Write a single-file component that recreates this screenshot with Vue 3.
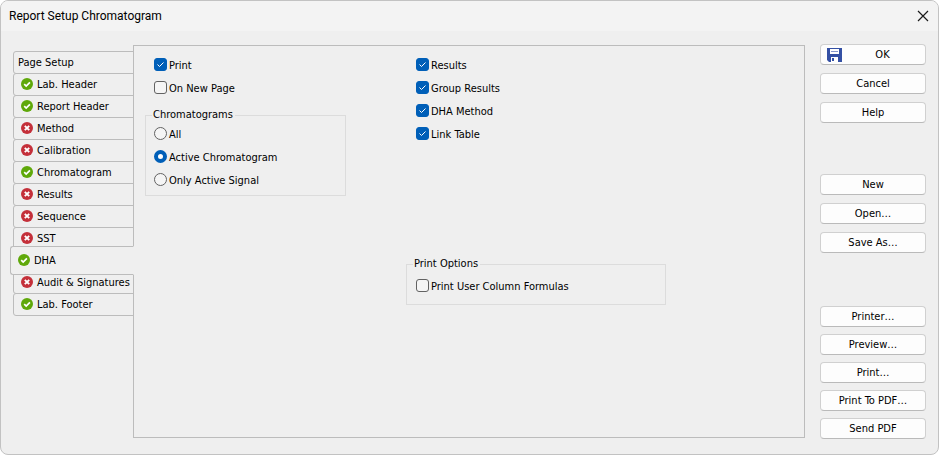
<template>
  <div class="dialog" role="dialog" aria-labelledby="dialog-title">
    <header class="title-bar">
      <h1 id="dialog-title">Report Setup Chromatogram</h1>
      <button type="button" class="close" aria-label="Close">
        <svg width="12" height="12" viewBox="0 0 12 12">
          <path d="M1 1L11 11M11 1L1 11" fill="none" stroke="#1a1a1a" stroke-width="1.2" />
        </svg>
      </button>
    </header>

    <main class="body">
      <nav class="tabs" role="tablist" aria-label="Report sections">
        <button
          v-for="tab in tabs"
          :key="tab.name"
          type="button"
          role="tab"
          class="tab"
          :class="{ active: tab.name === activeTab, plain: !tab.state }"
          :aria-selected="tab.name === activeTab"
          @click="activeTab = tab.name"
        >
          <svg v-if="tab.state" class="state" width="12" height="12" viewBox="0 0 12 12">
            <circle cx="6" cy="6" r="6" :fill="tab.state === 'on' ? '#5fa80a' : '#c4303a'" />
            <path
              v-if="tab.state === 'on'"
              d="M3.2 6.1L5.2 8.1L8.9 4.3"
              fill="none"
              stroke="#fff"
              stroke-width="1.7"
            />
            <path
              v-else
              d="M3.8 3.8L8.2 8.2M8.2 3.8L3.8 8.2"
              fill="none"
              stroke="#fff"
              stroke-width="1.9"
            />
          </svg>
          <span class="text">{{ tab.name }}</span>
        </button>
      </nav>

      <section class="panel" role="tabpanel">
        <div class="column">
          <label class="option">
            <input v-model="print" type="checkbox" /><span class="text">Print</span>
          </label>
          <label class="option">
            <input v-model="newPage" type="checkbox" /><span class="text">On New Page</span>
          </label>

          <fieldset class="chromatograms">
            <legend>Chromatograms</legend>
            <label v-for="item in sources" :key="item" class="option">
              <input v-model="source" type="radio" name="source" :value="item" />
              <span class="text">{{ item }}</span>
            </label>
          </fieldset>
        </div>

        <div class="column">
          <label v-for="item in contents" :key="item.name" class="option">
            <input v-model="item.checked" type="checkbox" />
            <span class="text">{{ item.name }}</span>
          </label>

          <fieldset class="print-options">
            <legend>Print Options</legend>
            <label class="option">
              <input v-model="userFormulas" type="checkbox" />
              <span class="text">Print User Column Formulas</span>
            </label>
          </fieldset>
        </div>
      </section>

      <aside class="actions">
        <div class="group">
          <button type="button" class="action">
            <svg class="disk" width="15" height="14" viewBox="0 0 15 14">
              <path d="M0 0H15V14H2L0 12Z" fill="#3450a4" />
              <path d="M3 1H12V6H3Z" fill="#fff" />
              <path d="M4 3H11V4H4Z" fill="#8796cb" />
              <path d="M4 9H11V14H4Z" fill="#fff" />
              <path d="M5 10H7V13H5Z" fill="#3450a4" />
            </svg>
            <span>OK</span>
          </button>
          <button type="button" class="action">Cancel</button>
          <button type="button" class="action">Help</button>
        </div>
        <div class="group files">
          <button type="button" class="action">New</button>
          <button type="button" class="action">Open…</button>
          <button type="button" class="action">Save As…</button>
        </div>
        <div class="group output">
          <button type="button" class="action">Printer…</button>
          <button type="button" class="action">Preview…</button>
          <button type="button" class="action">Print…</button>
          <button type="button" class="action">Print To PDF…</button>
          <button type="button" class="action">Send PDF</button>
        </div>
      </aside>
    </main>
  </div>
</template>

<script setup>
import { ref } from "vue";

const tabs = [
  { name: "Page Setup", state: null },
  { name: "Lab. Header", state: "on" },
  { name: "Report Header", state: "on" },
  { name: "Method", state: "off" },
  { name: "Calibration", state: "off" },
  { name: "Chromatogram", state: "on" },
  { name: "Results", state: "off" },
  { name: "Sequence", state: "off" },
  { name: "SST", state: "off" },
  { name: "DHA", state: "on" },
  { name: "Audit & Signatures", state: "off" },
  { name: "Lab. Footer", state: "on" },
];
const activeTab = ref("DHA");

const print = ref(true);
const newPage = ref(false);
const userFormulas = ref(false);

const sources = ["All", "Active Chromatogram", "Only Active Signal"];
const source = ref("Active Chromatogram");

const contents = ref([
  { name: "Results", checked: true },
  { name: "Group Results", checked: true },
  { name: "DHA Method", checked: true },
  { name: "Link Table", checked: true },
]);
</script>

<style>
body {
  margin: 0;
  background: #fff;
}
</style>

<style scoped>
.dialog {
  display: flex;
  flex-direction: column;
  box-sizing: border-box;
  min-height: 100vh;
  overflow: hidden;
  border: 1px solid #c2c2c2;
  border-radius: 8px;
  background: #efefef;
  color: #000;
  font: 11px/14px Tahoma, "DejaVu Sans Condensed", sans-serif;
}

button {
  margin: 0;
  font: inherit;
  color: inherit;
}

.title-bar {
  display: flex;
  align-items: center;
  justify-content: space-between;
  height: 30px;
  padding: 0 9px 0 8px;
  background: #f3f3f3;
}

.title-bar h1 {
  margin: 0;
  font: 12px/16px "Segoe UI", Roboto, sans-serif;
}

.close {
  display: flex;
  padding: 0;
  border: 0;
  background: none;
}

.body {
  display: flex;
  flex: 1;
  padding: 13px 12px 14px 9px;
}

/* tabs overlap the panel's left border by one pixel */
.tabs {
  display: flex;
  flex-direction: column;
  width: 124px;
  margin-top: 7px;
  margin-right: -1px;
}

.tab {
  display: flex;
  align-items: center;
  gap: 4px;
  box-sizing: border-box;
  height: 23px;
  margin: 0 0 -1px 3px;
  padding: 0 0 1px 7px;
  border: 1px solid #bcbcbc;
  border-radius: 3px 0 0 3px;
  background: #efefef;
  text-align: left;
  white-space: nowrap;
}

.tab.plain {
  padding-left: 4px;
}

.tab.active {
  z-index: 1;
  height: 29px;
  margin: -3px 0 -4px;
  border-right-color: #efefef;
}

.state {
  flex: none;
}

.text {
  padding-top: 2px;
}

.panel {
  display: flex;
  flex: 1;
  gap: 60px;
  margin-top: 1px;
  margin-bottom: 2px;
  padding: 7px 11px;
  border: 1px solid #bcbcbc;
}

.column {
  display: flex;
  flex-direction: column;
}

.column:first-child {
  width: 201px;
}

.column:last-child {
  width: 260px;
}

.column > .option {
  margin-left: 7px;
}

.option {
  display: flex;
  align-items: center;
  gap: 2px;
  height: 23px;
  padding-left: 2px;
}

.column:last-child .option {
  padding-left: 3px;
}

.option input {
  appearance: none;
  box-sizing: border-box;
  width: 13px;
  height: 13px;
  margin: 0;
  border: 1px solid #626262;
  border-radius: 3px;
  background: #f5f5f5;
}

.option input[type="checkbox"]:checked {
  border-color: #005fb8;
  background: #005fb8
    url("data:image/svg+xml,%3Csvg xmlns='http://www.w3.org/2000/svg' viewBox='0 0 11 11'%3E%3Cpath d='M2.5 5.5L4.5 7.5L8.5 3.5' fill='none' stroke='%23fff' stroke-width='1'/%3E%3C/svg%3E")
    center / 11px 11px no-repeat;
}

.option input[type="radio"] {
  border-radius: 50%;
}

.option input[type="radio"]:checked {
  border: 4px solid #005fb8;
  background: #fff;
}

fieldset {
  min-width: 0;
  margin: 0;
  padding: 0 6px 4px;
  border: 1px solid #dcdcdc;
}

legend {
  padding: 0 2px 0 1px;
}

.chromatograms {
  margin-top: 9px;
}

.print-options {
  margin-top: 112px;
  padding-top: 3px;
  padding-bottom: 7px;
}

.actions {
  width: 106px;
  margin-left: 15px;
}

.group {
  display: flex;
  flex-direction: column;
  gap: 8px;
}

.group.files {
  margin-top: 51px;
}

.group.output {
  gap: 7px;
  margin-top: 53px;
}

.action {
  display: flex;
  align-items: center;
  justify-content: center;
  box-sizing: border-box;
  height: 21px;
  padding: 0 6px;
  border: 1px solid #d0d0d0;
  border-bottom-color: #bababa;
  border-radius: 4px;
  background: #fdfdfd;
}

.disk {
  flex: none;
}

.disk + span {
  flex: 1;
  padding-left: 4px;
}
</style>
